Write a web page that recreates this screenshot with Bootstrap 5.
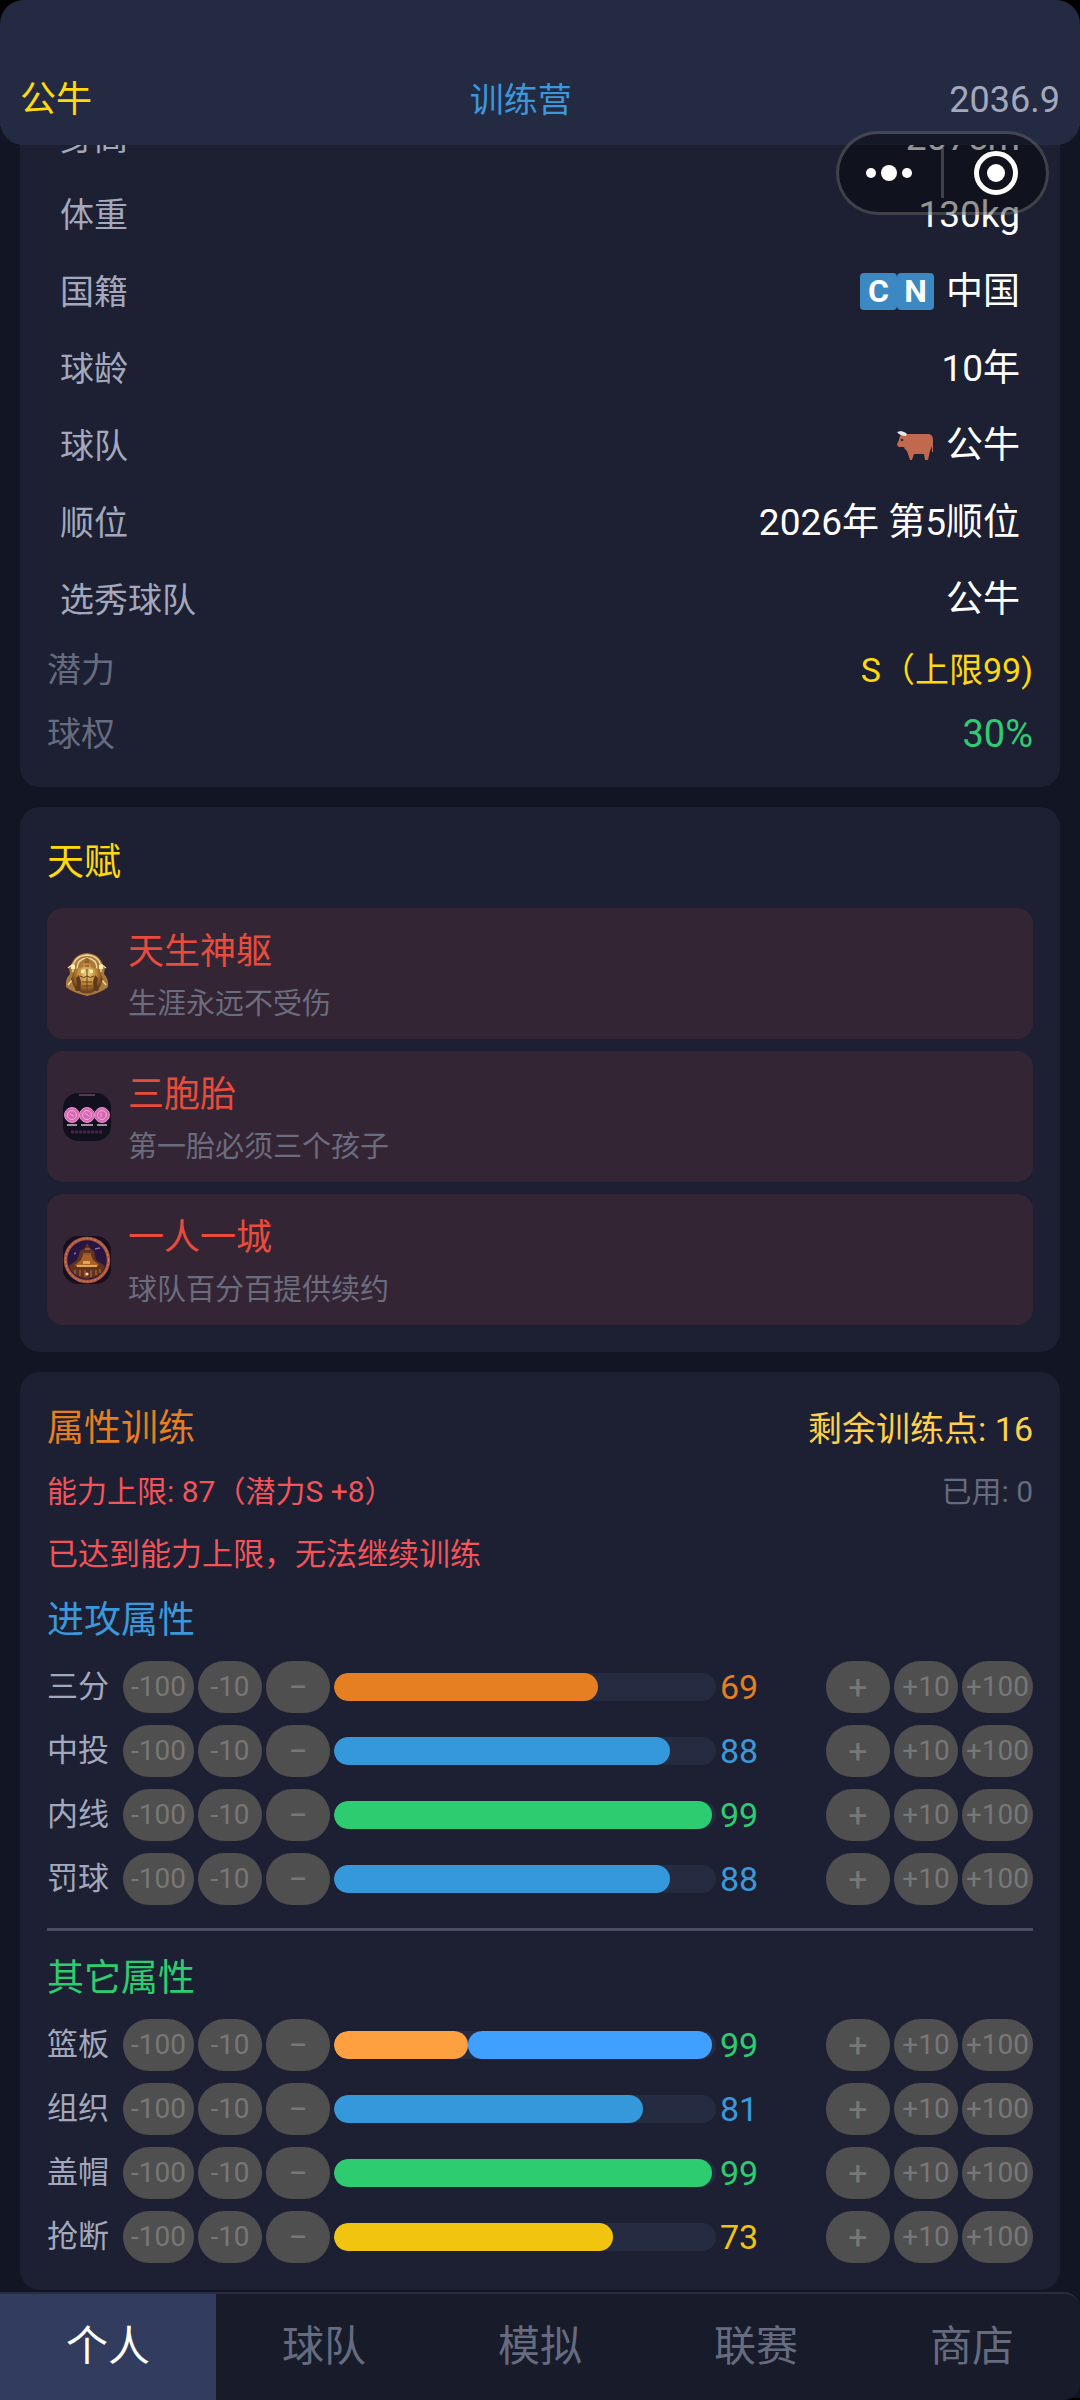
<!DOCTYPE html>
<html lang="zh-CN">
<head>
<meta charset="utf-8">
<meta name="viewport" content="width=device-width, initial-scale=1">
<title>训练营</title>
<link href="https://cdn.jsdelivr.net/npm/bootstrap@5.3.0/dist/css/bootstrap.min.css" rel="stylesheet">
<style>
  html { background: #000; }
  body { background: #121524; color: #fff; font-family: Roboto, "Noto Sans CJK SC", sans-serif; font-size: 34px; line-height: 54px; }
  .topbar { height: 145px; padding: 0 20px 18px; background: #252a43; border-radius: 24px; z-index: 10; }
  .topbar::before { content: ""; position: absolute; inset: 0 0 auto; height: 40px; background: #000; z-index: -2; }
  .topbar::after { content: ""; position: absolute; inset: 0; background: #252a43; border-radius: 24px; z-index: -1; }
  .page-title { font-size: 34px; line-height: 54px; }
  .fs-title { font-size: 36px; }
  .fs-value { font-size: 38px; }
  .fs-note { font-size: 29px; }
  .c-gold { color: #ffd90f; } .c-amber { color: #ffd04a; } .c-blue { color: #3b98db; } .c-green { color: #2ecc71; }
  .c-orange { color: #e67e22; } .c-yellow { color: #f1c40f; } .c-red { color: #e74c3c; } .c-alert { color: #f5535a; }
  .c-soft { color: #a3a8bd; } .c-dim { color: #666b80; }
  main { padding: 99px 20px 108px; gap: 20px; }
  .panel { background: #1c2032; border-radius: 20px; padding: 27px; }
  .panel-profile { padding-top: 0; padding-bottom: 21px; border-radius: 0 0 20px 20px; }
  .info-line { height: 77px; padding: 0 13px; }
  .info-line dd { font-size: 37px; }
  .info-short { height: 64px; }
  .cn-tile { width: 37px; height: 37px; line-height: 37px; font-size: 32px; background: #3b88c3; border-radius: 4px; text-align: center; font-weight: 700; }
  .ox { width: 37px; height: 30px; }
  .talent-title { margin-top: 2px; margin-bottom: 18px; }
  .talent { background: #342534; border-radius: 16px; padding: 14px 16px 13px; gap: 17px; }
  .talent svg { width: 48px; height: 48px; flex: none; }
  .talent-name { line-height: 60px; }
  .talent p { line-height: 44px; color: #6b6c7e; }
  .capsule { top: 131px; right: 31px; width: 213px; height: 84px; z-index: 20; border: 3px solid rgba(255,255,255,.2); border-radius: 42px; background: rgba(0,0,0,.42); }
  .capsule button { background: none; border: 0; padding: 0; flex: 1; display: flex; align-items: center; justify-content: center; }
  .capsule .btn-more { padding-right: 4px; }
  .capsule .btn-close-app { position: relative; padding-left: 4px; }
  .capsule .btn-close-app::before { content: ""; position: absolute; left: -2px; top: 14px; bottom: 14px; width: 3px; background: rgba(255,255,255,.2); }
  .title-line { line-height: 60px; }
  .limit-line { font-size: 30px; line-height: 44px; margin-top: 11px; }
  .warn-line { font-size: 31px; line-height: 46px; margin-top: 18px; }
  .section-title { font-size: 37px; }
  .group-title, .talent-title { line-height: 54px; }
  .group-title { margin: 16px 0 13px; }
  .rule { height: 3px; margin: 23px 0 21px; background: #4a4e62; border: 0; opacity: 1; }
  .attrs { gap: 12px; }
  .attr { height: 52px; gap: 4px; }
  .attr-name { width: 72px; font-size: 31px; color: #a3a8bd; }
  .attr-value { width: 102px; }
  .step { width: 64px; height: 52px; flex: none; padding: 0; border: 0; border-radius: 26px; background: #4f4f4f; color: #777; font-size: 28px; line-height: 52px; }
  .step:disabled { color: #777; }
  .step-wide { width: 71px; }
  .step-one { font-size: 34px; }
  .attr .progress { flex: 1; height: 28px; border-radius: 14px; background: #252c41; }
  .attr .progress-bar { border-radius: 14px; }
  .bg-b { background: #3498db; } .bg-g { background: #2ecc71; } .bg-o { background: #e67e22; } .bg-y { background: #f1c40f; }
  .bg-o2 { background: #ffa040; } .bg-b2 { background: #40a0ff; }
  .tabs { height: 108px; background: #171b2a; border-top: 2px solid #282d40; border-radius: 0 16px 16px 0; z-index: 10; }
  .tabs a { flex: 1; display: flex; align-items: center; justify-content: center; font-size: 42px; color: #666b80; text-decoration: none; }
  .tabs a.active { background: #323c5f; color: #fff; }
</style>
</head>
<body>
<header class="topbar fixed-top d-flex justify-content-between align-items-end">
  <span class="fs-title c-gold">公牛</span>
  <h1 class="m-0 fw-normal c-blue page-title">训练营</h1>
  <time class="c-soft fs-title">2036.9</time>
</header>

<div class="capsule position-fixed d-flex">
  <button class="btn-more" type="button" aria-label="更多"><svg width="48" height="20" viewBox="0 0 48 20" fill="#fff"><circle cx="6" cy="10" r="5"/><circle cx="24" cy="10" r="8"/><circle cx="42" cy="10" r="5"/></svg></button>
  <button class="btn-close-app" type="button" aria-label="关闭"><svg width="46" height="46" viewBox="0 0 46 46"><circle cx="23" cy="23" r="19.5" fill="none" stroke="#fff" stroke-width="5"/><circle cx="23" cy="23" r="9" fill="#fff"/></svg></button>
</div>

<main class="d-flex flex-column">
  <section class="panel panel-profile">
    <dl class="m-0">
      <div class="info-line d-flex justify-content-between align-items-center"><dt class="fw-normal c-soft">身高</dt><dd class="m-0">207cm</dd></div>
      <div class="info-line d-flex justify-content-between align-items-center"><dt class="fw-normal c-soft">体重</dt><dd class="m-0">130kg</dd></div>
      <div class="info-line d-flex justify-content-between align-items-center"><dt class="fw-normal c-soft">国籍</dt><dd class="m-0 d-flex align-items-center"><span class="cn-tile">C</span><span class="cn-tile me-2">N</span><span class="ms-1">中国</span></dd></div>
      <div class="info-line d-flex justify-content-between align-items-center"><dt class="fw-normal c-soft">球龄</dt><dd class="m-0">10年</dd></div>
      <div class="info-line d-flex justify-content-between align-items-center"><dt class="fw-normal c-soft">球队</dt><dd class="m-0 d-flex align-items-center">
        <svg class="ox me-2" viewBox="0 0 37 30"><path fill="#c1694f" d="M3 5Q6 2 10 3H32Q36 4 36 9V21H35V15Q34 18 33 20L31 29H28L27 23H17L15 29H13L10 20Q7 18 7 16H2Q0 15 0 13Q2 10 3 5Z"/><path fill="#e1e8ed" d="M0 1Q3 5 9 5Q11 2 7 1L4 0Z"/><circle cx="5" cy="9" r="1.3" fill="#292f33"/></svg><span class="ms-1">公牛</span></dd></div>
      <div class="info-line d-flex justify-content-between align-items-center"><dt class="fw-normal c-soft">顺位</dt><dd class="m-0">2026年 第5顺位</dd></div>
      <div class="info-line d-flex justify-content-between align-items-center"><dt class="fw-normal c-soft">选秀球队</dt><dd class="m-0">公牛</dd></div>
      <div class="info-short d-flex justify-content-between align-items-center"><dt class="fw-normal c-dim">潜力</dt><dd class="m-0 c-gold">S（上限99)</dd></div>
      <div class="info-short d-flex justify-content-between align-items-center"><dt class="fw-normal c-dim">球权</dt><dd class="m-0 c-green fs-value">30%</dd></div>
    </dl>
  </section>

  <section class="panel">
    <h2 class="section-title talent-title c-gold fw-normal">天赋</h2>
    <div class="d-flex flex-column attrs">
      <article class="talent d-flex align-items-center">
        <svg viewBox="0 0 48 48"><defs><radialGradient id="gold" cy=".45"><stop offset="0" stop-color="#f6d78a"/><stop offset=".6" stop-color="#bd8436"/><stop offset="1" stop-color="#6d421d"/></radialGradient></defs>
          <path fill="#a8793c" d="M24 3Q37 4 40 16L42 17L41 24Q46 29 45 37Q38 43 24 46Q10 43 3 37Q2 29 7 24L6 17L8 16Q11 4 24 3Z"/>
          <path fill="none" stroke="#f1d798" stroke-width="1.4" d="M10 22Q9 6 24 5Q39 6 38 22M14 19Q14 9 24 8Q34 9 34 19M5 18L10 14M43 18L38 14M5 35L10 29M43 35L38 29"/>
          <path fill="#5d3a1c" d="M13 20L9 30L13 41L35 41L39 30L35 20Z"/>
          <path fill="url(#gold)" d="M21 10Q24 6 27 10L28 17L36 19L40 29L37 37L34 36L35 28L32 25L30 32L31 42Q24 45 17 42L18 32L16 25L13 28L14 36L11 37L8 29L12 19L20 17Z"/>
          <path fill="none" stroke="#67401b" stroke-width="1" d="M24 19V41M17 26Q21 29 24 26Q27 29 31 26M19 32H29M19 36H29M22 12H26M22 16H26"/>
          <path fill="#fff0b0" d="M18 20L22 19L21 23L18 23ZM30 20L26 19L27 23L30 23ZM8 15h4v4h-4zM36 15h4v4h-4z"/></svg>
        <div><h3 class="m-0 fw-normal fs-title talent-name c-red">天生神躯</h3><p class="m-0 fs-note">生涯永远不受伤</p></div>
      </article>
      <article class="talent d-flex align-items-center">
        <svg viewBox="0 0 48 48"><rect width="48" height="48" rx="15" fill="#12101f"/><path d="M16 2H32" stroke="#6b4660" stroke-width="1.6"/>
          <g fill="#d968b4" stroke="#f19ad5" stroke-width="1"><circle cx="9" cy="22" r="7.4"/><circle cx="24" cy="22" r="7.4"/><circle cx="39" cy="22" r="7.4"/></g>
          <g fill="none" stroke="#f9b0d2" stroke-width="1"><circle cx="9" cy="22" r="4.5"/><circle cx="24" cy="22" r="4.5"/><circle cx="39" cy="22" r="4.5"/><path d="M7 21l4 2M22 20l4 3M38 20v4"/></g>
          <path d="M4 32H14M18 32H30M34 32H44" stroke="#c9bdcf" stroke-width="1.6"/><path d="M8 39H40" stroke="#4d204e" stroke-width="3" stroke-dasharray="3 1"/></svg>
        <div><h3 class="m-0 fw-normal fs-title talent-name c-red">三胞胎</h3><p class="m-0 fs-note">第一胎必须三个孩子</p></div>
      </article>
      <article class="talent d-flex align-items-center">
        <svg viewBox="0 0 48 48"><rect width="48" height="48" rx="15" fill="#190e20"/><circle cx="24" cy="24" r="21.5" fill="#291542" stroke="#a9583f" stroke-width="3.4"/><circle cx="24" cy="24" r="21.5" fill="none" stroke="#d98560" stroke-width="1" stroke-dasharray="2 2"/>
          <path fill="#603222" d="M6 30L14 24L17 15L22 12L24 7L27 12L31 15L33 24L42 30Q39 41 24 43Q9 41 6 30Z"/>
          <path fill="#a86028" d="M12 29L18 24L20 19H28L30 24L36 29L33 31H14Z"/><path fill="#e3a552" d="M14 29h20v2H14zM20 25h7v3h-7z"/>
          <path fill="none" stroke="#ae662b" stroke-width="1.3" d="M12 34V38M17 34V40M22 34V41M28 34V41M33 34V39M37 33V37M20 18H28M22 13H27"/><path stroke="#8e66b0" d="M32 13L37 12M11 18L13 17" stroke-width="1.4"/><circle cx="24" cy="38" r="1.6" fill="#ffd8ad"/></svg>
        <div><h3 class="m-0 fw-normal fs-title talent-name c-red">一人一城</h3><p class="m-0 fs-note">球队百分百提供续约</p></div>
      </article>
    </div>
  </section>

  <section class="panel">
    <div class="title-line d-flex justify-content-between"><h2 class="m-0 fw-normal section-title title-line c-orange">属性训练</h2><span class="c-amber">剩余训练点: 16</span></div>
    <div class="limit-line d-flex justify-content-between"><span class="c-alert">能力上限: 87（潜力S +8）</span><span class="c-dim">已用: 0</span></div>
    <p class="warn-line mb-0 c-alert">已达到能力上限，无法继续训练</p>

    <h3 class="section-title group-title fw-normal c-blue">进攻属性</h3>
    <div class="attrs d-flex flex-column">
      <div class="attr d-flex align-items-center"><span class="attr-name">三分</span><button class="step step-wide" disabled>-100</button><button class="step" disabled>-10</button><button class="step step-one" disabled>−</button><div class="progress"><div class="progress-bar bg-o" style="width:69%"></div></div><span class="attr-value c-orange">69</span><button class="step step-one" disabled>+</button><button class="step" disabled>+10</button><button class="step step-wide" disabled>+100</button></div>
      <div class="attr d-flex align-items-center"><span class="attr-name">中投</span><button class="step step-wide" disabled>-100</button><button class="step" disabled>-10</button><button class="step step-one" disabled>−</button><div class="progress"><div class="progress-bar bg-b" style="width:88%"></div></div><span class="attr-value c-blue">88</span><button class="step step-one" disabled>+</button><button class="step" disabled>+10</button><button class="step step-wide" disabled>+100</button></div>
      <div class="attr d-flex align-items-center"><span class="attr-name">内线</span><button class="step step-wide" disabled>-100</button><button class="step" disabled>-10</button><button class="step step-one" disabled>−</button><div class="progress"><div class="progress-bar bg-g" style="width:99%"></div></div><span class="attr-value c-green">99</span><button class="step step-one" disabled>+</button><button class="step" disabled>+10</button><button class="step step-wide" disabled>+100</button></div>
      <div class="attr d-flex align-items-center"><span class="attr-name">罚球</span><button class="step step-wide" disabled>-100</button><button class="step" disabled>-10</button><button class="step step-one" disabled>−</button><div class="progress"><div class="progress-bar bg-b" style="width:88%"></div></div><span class="attr-value c-blue">88</span><button class="step step-one" disabled>+</button><button class="step" disabled>+10</button><button class="step step-wide" disabled>+100</button></div>
    </div>
    <hr class="rule">
    <h3 class="section-title group-title fw-normal c-green">其它属性</h3>
    <div class="attrs d-flex flex-column">
      <div class="attr d-flex align-items-center"><span class="attr-name">篮板</span><button class="step step-wide" disabled>-100</button><button class="step" disabled>-10</button><button class="step step-one" disabled>−</button><div class="progress"><div class="progress-bar bg-o2" style="width:35%"></div><div class="progress-bar bg-b2" style="width:64%"></div></div><span class="attr-value c-green">99</span><button class="step step-one" disabled>+</button><button class="step" disabled>+10</button><button class="step step-wide" disabled>+100</button></div>
      <div class="attr d-flex align-items-center"><span class="attr-name">组织</span><button class="step step-wide" disabled>-100</button><button class="step" disabled>-10</button><button class="step step-one" disabled>−</button><div class="progress"><div class="progress-bar bg-b" style="width:81%"></div></div><span class="attr-value c-blue">81</span><button class="step step-one" disabled>+</button><button class="step" disabled>+10</button><button class="step step-wide" disabled>+100</button></div>
      <div class="attr d-flex align-items-center"><span class="attr-name">盖帽</span><button class="step step-wide" disabled>-100</button><button class="step" disabled>-10</button><button class="step step-one" disabled>−</button><div class="progress"><div class="progress-bar bg-g" style="width:99%"></div></div><span class="attr-value c-green">99</span><button class="step step-one" disabled>+</button><button class="step" disabled>+10</button><button class="step step-wide" disabled>+100</button></div>
      <div class="attr d-flex align-items-center"><span class="attr-name">抢断</span><button class="step step-wide" disabled>-100</button><button class="step" disabled>-10</button><button class="step step-one" disabled>−</button><div class="progress"><div class="progress-bar bg-y" style="width:73%"></div></div><span class="attr-value c-yellow">73</span><button class="step step-one" disabled>+</button><button class="step" disabled>+10</button><button class="step step-wide" disabled>+100</button></div>
    </div>
  </section>
</main>

<nav class="tabs fixed-bottom d-flex">
  <a class="active" href="#me" aria-current="page">个人</a><a href="#team">球队</a><a href="#sim">模拟</a><a href="#league">联赛</a><a href="#shop">商店</a>
</nav>
<script src="https://cdn.jsdelivr.net/npm/bootstrap@5.3.0/dist/js/bootstrap.bundle.min.js"></script>
</body>
</html>
